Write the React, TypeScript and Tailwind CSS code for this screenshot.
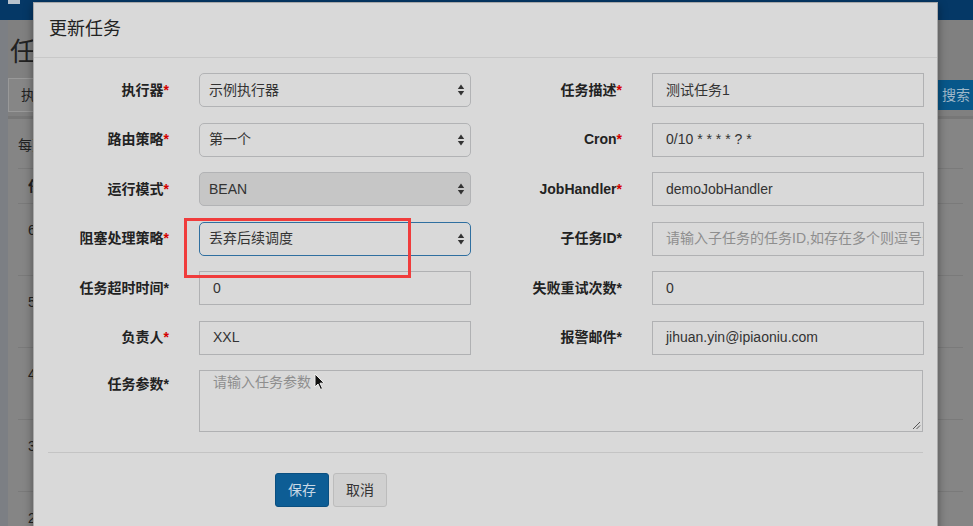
import type { ReactNode } from "react";

const font = { fontFamily: '"Liberation Sans", "Noto Sans CJK SC", sans-serif' };

function SelectArrows() {
  return (
    <svg width="8" height="12" viewBox="0 0 8 12" className="shrink-0">
      <path d="M4 0.5 L7.2 5 L0.8 5 Z" fill="#333" />
      <path d="M4 11.5 L7.2 7 L0.8 7 Z" fill="#333" />
    </svg>
  );
}

function Label({ text, red = true, top = false }: { text: string; red?: boolean; top?: boolean }) {
  return (
    <div
      className={`flex w-[121px] shrink-0 justify-end text-[14px] font-bold text-[#222] ${
        top ? "items-start pt-[4px]" : "h-[34px] items-center"
      }`}
    >
      {text}
      <span className={red ? "text-[#d40000]" : "text-[#222]"}>*</span>
    </div>
  );
}

function Select({
  value,
  disabled = false,
  focused = false,
}: {
  value: string;
  disabled?: boolean;
  focused?: boolean;
}) {
  return (
    <div
      className={`flex h-[34px] w-[272px] shrink-0 items-center justify-between rounded-[5px] border pl-[9px] pr-[5px] text-[14px] text-[#333] ${
        focused ? "border-[#2f6fa0]" : "border-[#b2b3b5]"
      } ${disabled ? "bg-[#c6c6c6]" : "bg-[#d9d9d9]"}`}
    >
      <span>{value}</span>
      <SelectArrows />
    </div>
  );
}

function Input({ value, placeholder = false }: { value: string; placeholder?: boolean }) {
  return (
    <div
      className={`flex h-[34px] w-[272px] shrink-0 items-center overflow-hidden whitespace-nowrap border border-[#b0b1b3] bg-[#d9d9d9] px-[13px] text-[14px] ${
        placeholder ? "text-[#8e8e8e]" : "text-[#333]"
      }`}
    >
      {value}
    </div>
  );
}

function Row({ children }: { children: ReactNode }) {
  return <div className="flex items-start gap-[30px]">{children}</div>;
}

function BackgroundPage() {
  return (
    <div className="flex h-full w-full flex-col bg-[#7c7f84]">
      <div className="h-[20px] shrink-0 bg-[#053866]">
        <div className="ml-[8px] h-[4px] w-[12px] bg-[#b8c2cc]" />
      </div>
      <div className="ml-[8px] flex flex-1 flex-col bg-[#808080] text-[#222]">
        <div className="pl-[2px] pt-[14px] text-[26px] leading-[36px]">任务管理</div>
        <div className="mt-[8px] flex h-[34px] items-center justify-between">
          <div className="flex h-[34px] w-[120px] items-center border border-[#999] bg-[#868686] pl-[12px] text-[14px]">
            执行器
          </div>
          <div className="flex h-[30px] w-[35px] items-center bg-[#07578a] pl-[4px] text-[14px] text-[#9fb7c9]">
            搜索
          </div>
        </div>
        <div className="mt-[4px] h-[3px] bg-[#777]" />
        <div className="flex flex-1 flex-col bg-[#858585] px-[10px]">
          <div className="pt-[16px] text-[14px]">每页</div>
          <div className="mt-[12px] flex h-[36px] items-center border-y border-[#7a7a7a] pl-[10px] text-[14px] font-bold">
            任务ID
          </div>
          {["6", "5", "4", "3", "2"].map((n) => (
            <div
              key={n}
              className="h-[72px] border-b border-[#7a7a7a] pl-[10px] pt-[16px] text-[14px]"
            >
              {n}
            </div>
          ))}
        </div>
      </div>
    </div>
  );
}

export default function App() {
  return (
    <div className="relative h-[526px] w-[973px] overflow-hidden" style={font}>
      <BackgroundPage />

      <div className="absolute left-[33px] top-[2px] h-[560px] w-[905px] border border-[#a9a9a9] bg-[#d9d9d9] shadow-[0_3px_9px_rgba(0,0,0,0.4)]">
        <div className="border-b border-[#c8c8c8] px-[15px] pb-[15px] pt-[14px] text-[18px] leading-[25px] text-[#222]">
          更新任务
        </div>

        <div className="flex flex-col gap-[15.5px] px-[14px] pt-[15px]">
          <Row>
            <Label text="执行器" />
            <Select value="示例执行器" />
            <Label text="任务描述" />
            <Input value="测试任务1" />
          </Row>
          <Row>
            <Label text="路由策略" />
            <Select value="第一个" />
            <Label text="Cron" />
            <Input value="0/10 * * * * ? *" />
          </Row>
          <Row>
            <Label text="运行模式" />
            <Select value="BEAN" disabled />
            <Label text="JobHandler" />
            <Input value="demoJobHandler" />
          </Row>
          <Row>
            <Label text="阻塞处理策略" />
            <Select value="丢弃后续调度" focused />
            <Label text="子任务ID" red={false} />
            <Input value="请输入子任务的任务ID,如存在多个则逗号分隔" placeholder />
          </Row>
          <Row>
            <Label text="任务超时时间" red={false} />
            <Input value="0" />
            <Label text="失败重试次数" red={false} />
            <Input value="0" />
          </Row>
          <Row>
            <Label text="负责人" />
            <Input value="XXL" />
            <Label text="报警邮件" red={false} />
            <Input value="jihuan.yin@ipiaoniu.com" />
          </Row>
          <Row>
            <Label text="任务参数" red={false} top />
            <div className="relative h-[62px] w-[724px] shrink-0 border border-[#b0b1b3] bg-[#d9d9d9] px-[13px] pt-[1px] text-[14px] text-[#8e8e8e]">
              请输入任务参数
              <svg
                width="9"
                height="9"
                viewBox="0 0 9 9"
                className="absolute bottom-[1px] right-[1px]"
              >
                <path d="M1 8 L8 1 M4.5 8 L8 4.5" stroke="#555" strokeWidth="1" />
              </svg>
            </div>
          </Row>
        </div>

        <div className="mx-[14px] mt-[20px] border-t border-[#c4c4c4] pl-[227px] pt-[20px]">
          <div className="flex gap-[4px]">
            <div className="flex h-[34px] w-[54px] items-center justify-center rounded-[3px] border border-[#0a4f80] bg-[#0d5d95] text-[14px] text-[#c9d9e6]">
              保存
            </div>
            <div className="flex h-[34px] w-[54px] items-center justify-center rounded-[3px] border border-[#bcbcbc] bg-[#d0d0d0] text-[14px] text-[#333]">
              取消
            </div>
          </div>
        </div>
      </div>

      <div className="absolute left-[184px] top-[218px] h-[60px] w-[227px] border-[3px] border-[#f03c3c]" />

      <svg
        width="12"
        height="18"
        viewBox="0 0 12 18"
        className="absolute left-[314px] top-[373px]"
      >
        <path
          d="M1 1 L1 14 L4 11 L6.5 16.5 L8.5 15.5 L6 10.2 L10.2 10.2 Z"
          fill="#111"
          stroke="#eee"
          strokeWidth="1"
        />
      </svg>
    </div>
  );
}
